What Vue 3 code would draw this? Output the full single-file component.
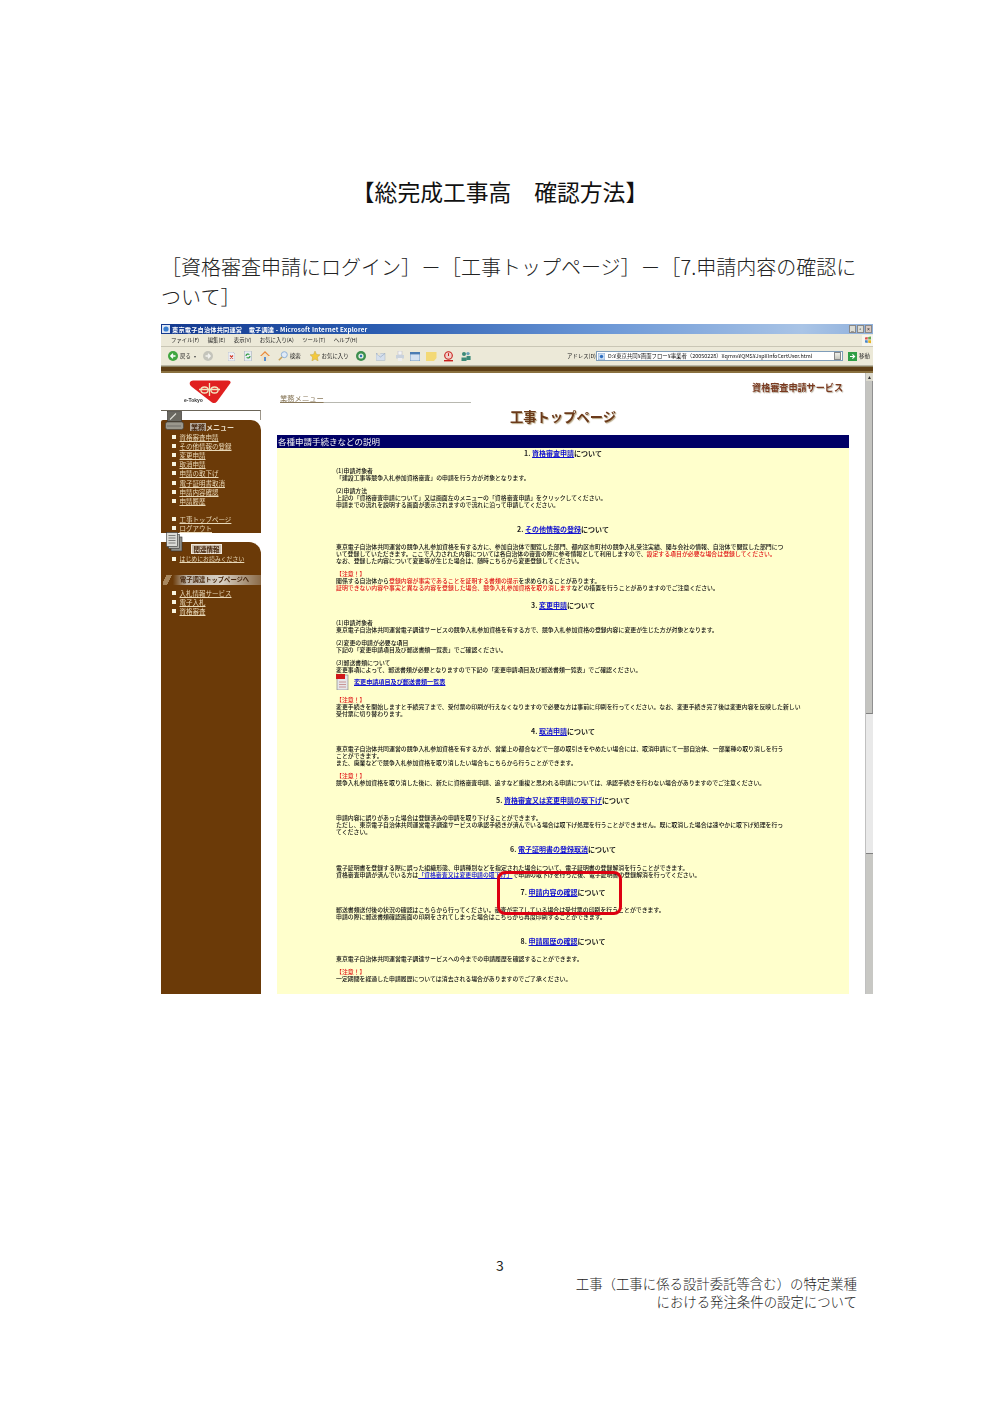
<script setup>
const R = (t) => ({ t, c: 'red' })
const L = (t) => ({ t, c: 'lnk' })

const sideMenu = ['資格審査申請', 'その他情報の登録', '変更申請', '取消申請', '申請の取下げ', '電子証明書取消', '申請内容確認', '申請履歴']
const sideMenu2 = ['工事トップページ', 'ログアウト']
const sideLinks = ['入札情報サービス', '電子入札', '資格審査']

const sections = [
  { n: '1.', link: '資格審査申請', tail: 'について', blocks: [
    ['(1)申請対象者', '「建設工事等競争入札参加資格審査」の申請を行う方が対象となります。'],
    ['(2)申請方法', '上記の「資格審査申請について」又は画面左のメニューの「資格審査申請」をクリックしてください。', '申請までの流れを説明する画面が表示されますので流れに沿って申請してください。']
  ] },
  { n: '2.', link: 'その他情報の登録', tail: 'について', wide: true, blocks: [
    ['東京電子自治体共同運営の競争入札参加資格を有する方に、参加自治体で閲覧した部門、都内区市町村の競争入札受注実績、関与会社の情報、自治体で閲覧した部門につ',
      ['いて登録していただきます。ここで入力された内容については各自治体の審査の際に参考情報として利用しますので、', R('設定する項目が必要な場合は登録してください。')],
      'なお、登録した内容について変更等が生じた場合は、随時こちらから変更登録してください。'],
    [[R('【注意！】')],
      ['関係する自治体から', R('登録内容が事実であることを証明する書類の提示'), 'を求められることがあります。'],
      [R('証明できない内容や事実と異なる内容を登録した場合、競争入札参加資格を取り消します'), 'などの措置を行うことがありますのでご注意ください。']]
  ] },
  { n: '3.', link: '変更申請', tail: 'について', blocks: [
    ['(1)申請対象者', '東京電子自治体共同運営電子調達サービスの競争入札参加資格を有する方で、競争入札参加資格の登録内容に変更が生じた方が対象となります。'],
    ['(2)変更の申請が必要な項目', '下記の「変更申請項目及び郵送書類一覧表」でご確認ください。'],
    ['(3)郵送書類について', '変更事項によって、郵送書類が必要となりますので下記の「変更申請項目及び郵送書類一覧表」でご確認ください。'],
    { pdf: '変更申請項目及び郵送書類一覧表' },
    [[R('【注意！】')], '変更手続きを開始しますと手続完了まで、受付票の印刷が行えなくなりますので必要な方は事前に印刷を行ってください。なお、変更手続き完了後は変更内容を反映した新しい', '受付票に切り替わります。']
  ] },
  { n: '4.', link: '取消申請', tail: 'について', blocks: [
    ['東京電子自治体共同運営の競争入札参加資格を有する方が、営業上の都合などで一部の取引きをやめたい場合には、取消申請にて一部自治体、一部業種の取り消しを行う', 'ことができます。', 'また、廃業などで競争入札参加資格を取り消したい場合もこちらから行うことができます。'],
    [[R('【注意！】')], '競争入札参加資格を取り消した後に、新たに資格審査申請、追すなど重複と思われる申請については、承認手続きを行わない場合がありますのでご注意ください。']
  ] },
  { n: '5.', link: '資格審査又は変更申請の取下げ', tail: 'について', blocks: [
    ['申請内容に誤りがあった場合は登録済みの申請を取り下げることができます。', 'ただし、東京電子自治体共同運営電子調達サービスの承認手続きが済んでいる場合は取下げ処理を行うことができません。既に取消した場合は速やかに取下げ処理を行っ', 'てください。']
  ] },
  { n: '6.', link: '電子証明書の登録取消', tail: 'について', blocks: [
    ['電子証明書を登録する際に誤った組織形態、申請種別などを指定された場合について、電子証明書の登録解消を行うことができます。',
      ['資格審査申請が済んでいる方は', L('「資格審査又は変更申請の取下げ」'), 'で申請の取下げを行った後、電子証明書の登録解消を行ってください。']]
  ] },
  { n: '7.', link: '申請内容の確認', tail: 'について', blocks: [
    ['郵送書類送付後の状況の確認はこちらから行ってください。審査が完了している場合は受付票の印刷を行うことができます。', '申請の際に郵送書類確認画面の印刷をされてしまった場合はこちらから再度印刷することができます。']
  ] },
  { n: '8.', link: '申請履歴の確認', tail: 'について', wide: true, blocks: [
    ['東京電子自治体共同運営電子調達サービスへの今までの申請履歴を確認することができます。'],
    [[R('【注意！】')], '一定期間を経過した申請履歴については消去される場合がありますのでご了承ください。']
  ] }
]

const segs = (line) => (Array.isArray(line) ? line : [line]).map((s) => (typeof s === 'string' ? { t: s, c: '' } : s))
</script>

<template>
  <div class="page">
    <h1 class="doc-title">【総完成工事高　確認方法】</h1>
    <p class="doc-path">［資格審査申請にログイン］－［工事トップページ］－［7.申請内容の確認に<br />ついて］</p>

    <div class="shot">
      <div class="titlebar">
        <svg class="ie" width="8" height="8" viewBox="0 0 8 8"><rect width="8" height="8" fill="#dfe8f5" /><circle cx="4" cy="4" r="2.6" fill="#3a7fd0" /></svg>
        <span class="title-text">東京電子自治体共同運営　電子調達 - Microsoft Internet Explorer</span>
        <span class="win-btns"><i>_</i><i>▫</i><i class="close">×</i></span>
      </div>

      <div class="menubar">
        <span>ファイル(F)</span><span>編集(E)</span><span>表示(V)</span><span>お気に入り(A)</span><span>ツール(T)</span><span>ヘルプ(H)</span>
        <span class="winlogo">
          <svg width="8" height="8" viewBox="0 0 8 8"><path d="M1 1.5 3.7 1v2.6H1z" fill="#d9534f" /><path d="M4.2 1 7 .6v3H4.2z" fill="#6aa84f" /><path d="M1 4.2h2.7v2.7L1 6.4z" fill="#4a86c8" /><path d="M4.2 4.2H7v3l-2.8-.4z" fill="#e6b422" /></svg>
        </span>
      </div>

      <div class="toolbar">
        <svg class="m0" width="10" height="10" viewBox="0 0 10 10"><circle cx="5" cy="5" r="5" fill="#3fa63f" /><path d="M7.5 5H3M5 2.8 2.8 5 5 7.2" stroke="#fff" stroke-width="1.3" fill="none" /></svg>
        <span class="tb-label m2">戻る</span>
        <span class="caret m3"></span>
        <svg class="m7" width="10" height="10" viewBox="0 0 10 10"><circle cx="5" cy="5" r="5" fill="#c4c4bb" /><path d="M2.5 5H7M5 2.8 7.2 5 5 7.2" stroke="#f4f4f0" stroke-width="1.3" fill="none" /></svg>
        <svg class="m15" width="7" height="9" viewBox="0 0 7 9"><path d="M0 0h5l2 2v7H0z" fill="#eef0f4" stroke="#9aa5b5" stroke-width=".5" /><path d="M2 3.5 5 6.5M5 3.5 2 6.5" stroke="#d23b2a" stroke-width="1.2" /></svg>
        <svg class="m8" width="10" height="10" viewBox="0 0 10 10"><rect x="1.5" width="7" height="10" fill="#e9edf2" stroke="#9aa5b5" stroke-width=".5" /><path d="M3 5a2 2 0 0 1 3.4-1.4M7 5a2 2 0 0 1-3.4 1.4" stroke="#2f9a3c" stroke-width="1.2" fill="none" /></svg>
        <svg class="m7" width="10" height="10" viewBox="0 0 10 10"><path d="M5 0 0 5h1.5v5h7V5H10z" fill="#f0e2c8" /><path d="M5 0 0 5h1.5L5 1.8 8.5 5H10z" fill="#e8893a" /><rect x="4" y="6" width="2" height="4" fill="#5b8fd0" /></svg>
        <svg class="m8" width="10" height="10" viewBox="0 0 10 10"><circle cx="6.3" cy="3.7" r="3" fill="#dfeaf7" stroke="#8fb0d6" /><path d="M4 6 .8 9.2" stroke="#c9a35a" stroke-width="1.5" /></svg>
        <span class="tb-label m2">検索</span>
        <svg class="m9" width="10" height="10" viewBox="0 0 10 10"><path d="M5 0 6.5 3.4 10 3.8 7.4 6.2 8.1 10 5 8.1 1.9 10 2.6 6.2 0 3.8 3.5 3.4z" fill="#f3c93c" stroke="#b69a3a" stroke-width=".4" /></svg>
        <span class="tb-label m2">お気に入り</span>
        <svg class="m7" width="10" height="10" viewBox="0 0 10 10"><circle cx="5" cy="5" r="5" fill="#3d8f4e" /><circle cx="5" cy="5" r="2.6" fill="#e6efe6" /><circle cx="5" cy="5" r="1.2" fill="#2f6fb8" /></svg>
        <svg class="m10" width="10" height="9" viewBox="0 0 10 9"><rect y="1.5" width="9" height="7" fill="#d5dfec" stroke="#9ab" stroke-width=".4" /><path d="M0 1.5 4.5 5 9 1.5" stroke="#8ea3bb" stroke-width=".6" fill="none" /><circle cx="3" cy="2" r="1.5" fill="#e9e3d0" /></svg>
        <svg class="m10" width="8" height="10" viewBox="0 0 8 10"><rect x="2" width="4" height="4" fill="#f4f4f4" stroke="#aab" stroke-width=".4" /><rect y="4" width="8" height="3.5" fill="#c9d2dc" /><rect x="2" y="7" width="4" height="3" fill="#eee" /></svg>
        <svg class="m6" width="10" height="9" viewBox="0 0 10 9"><rect width="10" height="9" fill="#d5e3f2" stroke="#4b7db3" stroke-width=".7" /><rect y="0" width="10" height="2.4" fill="#4b7db3" /></svg>
        <svg class="m6" width="11" height="10" viewBox="0 0 11 10"><path d="M0 1h10.5v6L8 10H0z" fill="#f3d976" /></svg>
        <svg class="m6" width="11" height="11" viewBox="0 0 11 11"><circle cx="5.5" cy="4.5" r="3.8" fill="#f2cfc8" stroke="#c8201c" stroke-width="1.1" /><path d="M5.5 2.2v2.8" stroke="#c8201c" /><rect x="1" y="9" width="9" height="1.4" fill="#c8201c" /></svg>
        <svg class="m7" width="10" height="10" viewBox="0 0 10 10"><circle cx="3" cy="3" r="2" fill="#3c8a78" /><circle cx="7" cy="2.6" r="1.7" fill="#6aa2b8" /><path d="M.5 10V6.5h5V10zM5.6 9V5h4v4z" fill="#3c8a78" /></svg>

        <div class="address">
          <span class="tb-label">アドレス(D)</span>
          <div class="addr-input">
            <svg width="7" height="7" viewBox="0 0 7 7"><rect width="7" height="7" fill="#cfe0f4" stroke="#6d93c4" stroke-width=".6" /><circle cx="3.5" cy="3.5" r="1.7" fill="#2f6fc0" /></svg>
            <span class="addr-text">D:¥東京共同¥画面フロー¥事業者（20050228）¥qmsv¥QMS¥Jsp¥InfoCertUser.html</span>
            <span class="addr-drop"></span>
          </div>
          <svg class="go" width="9" height="9" viewBox="0 0 9 9"><rect width="9" height="9" fill="#2f9e45" /><path d="M2 4.5h4.4M4.4 2.4 6.6 4.5 4.4 6.6" stroke="#fff" stroke-width="1.1" fill="none" /></svg>
          <span class="tb-label go-label">移動</span>
        </div>
      </div>

      <div class="brownstrip"></div>

      <div class="browser-body">
        <aside class="side">
          <div class="logo-block">
            <svg class="logo" width="44" height="24" viewBox="0 0 44 24">
              <path d="M2 2Q3 .5 5 .5H40Q43 .5 42.5 3L29 21.5Q27 24 24 22.5L4 7Q.8 4.5 2 2z" fill="#e02020" />
              <path d="M11 9.5H32M21.5 3v13" stroke="#f2e6c0" stroke-width="1.3" fill="none" />
              <ellipse cx="16.5" cy="10" rx="3.6" ry="3" fill="none" stroke="#f2e6c0" stroke-width="1.3" />
              <ellipse cx="26.5" cy="10" rx="3.6" ry="3" fill="none" stroke="#f2e6c0" stroke-width="1.3" />
            </svg>
            <span class="etokyo">e-Tokyo</span>
          </div>

          <div class="white-gap first">
            <svg class="pc-icon" width="19" height="19" viewBox="0 0 19 19"><rect x="2.500" y=".5" width="14" height="10" fill="#6a6860" stroke="#3c3a35" stroke-width=".7" /><path d="M5 8.500 11 2.500" stroke="#e0e0d8" stroke-width="1.1" /><rect x=".5" y="11" width="18" height="7.500" rx="2" fill="#9a978c" stroke="#3f3c35" stroke-width=".6" /><path d="M2.500 15h14" stroke="#444" stroke-width="1" stroke-dasharray="1 1" /></svg>
          </div>
          <div class="panel">
            <div class="panel-head"><b class="chip">業務</b><span class="chip-rest">メニュー</span></div>
            <ul class="side-list">
              <li v-for="m in sideMenu" :key="m"><i></i><a>{{ m }}</a></li>
            </ul>
            <ul class="side-list spaced">
              <li v-for="m in sideMenu2" :key="m"><i></i><a>{{ m }}</a></li>
            </ul>
          </div>

          <div class="white-gap">
            <svg class="doc-icon" width="17" height="20" viewBox="0 0 17 20"><rect x="5" y="5" width="11" height="14" fill="#8f8f8a" stroke="#333" stroke-width=".6" /><rect x="2.500" y="2.500" width="11" height="14" fill="#b5b5b0" stroke="#333" stroke-width=".6" /><rect x=".5" y=".5" width="11" height="14" fill="#dcdcd8" stroke="#333" stroke-width=".6" /><path d="M2.500 3.500h7M2.500 6h7M2.500 8.500h7M2.500 11h7" stroke="#555" stroke-width=".7" /></svg>
          </div>
          <div class="panel grow">
            <div class="panel-head second"><b class="chip boxed">関連情報</b></div>
            <ul class="side-list tight">
              <li><i></i><a>はじめにお読みください</a></li>
            </ul>
            <div class="banner">電子調達トップページへ</div>
            <ul class="side-list">
              <li v-for="m in sideLinks" :key="m"><i></i><a>{{ m }}</a></li>
            </ul>
          </div>
        </aside>

        <main class="content">
          <div class="content-top">
            <a class="biz-link">業務メニュー</a>
            <span class="biz-line"></span>
            <span class="service">資格審査申請サービス</span>
          </div>
          <h2 class="page-heading">工事トップページ</h2>
          <div class="navy">各種申請手続きなどの説明</div>
          <div class="yellow">
            <section v-for="s in sections" :key="s.n" class="sec" :class="{ wide: s.wide }">
              <h3 class="sec-head">{{ s.n }} <a>{{ s.link }}</a>{{ s.tail }}</h3>
              <template v-for="(b, i) in s.blocks" :key="i">
                <div v-if="b.pdf" class="pdf-row">
                  <svg width="13" height="16" viewBox="0 0 13 16"><rect x="1" y="1" width="11" height="15" fill="#e6e6ea" stroke="#777" stroke-width=".6" /><rect width="9" height="5" fill="#d01818" /><path d="M3 8h7M3 10.500h7M3 13h7" stroke="#c08080" stroke-width=".8" /></svg>
                  <a>{{ b.pdf }}</a>
                </div>
                <div v-else class="block">
                  <p v-for="(line, j) in b" :key="j" class="line"><span v-for="(g, k) in segs(line)" :key="k" :class="g.c">{{ g.t }}</span></p>
                </div>
              </template>
            </section>
          </div>
        </main>

        <div class="scroll">
          <span class="sc-btn">▲</span>
          <span class="sc-thumb"></span>
          <span class="sc-track"></span>
          <span class="sc-lower"></span>
        </div>
      </div>

      <div class="highlight"></div>
    </div>

    <div class="page-no">3</div>
    <div class="doc-foot">
      <p>工事（工事に係る設計委託等含む）の特定業種</p>
      <p>における発注条件の設定について</p>
    </div>
  </div>
</template>

<style>
html, body { margin: 0; background: #fff; }
</style>

<style scoped>
* { box-sizing: border-box; }
.page {
  width: 1000px;
  height: 1414px;
  padding: 177px 143px 0 161px;
  font-family: "Noto Sans CJK JP", "Liberation Serif", serif;
  color: #222;
  overflow: hidden;
}
.doc-title {
  margin: 0 18px 0 0;
  font-size: 22.8px;
  line-height: 30px;
  font-weight: 400;
  text-align: center;
  color: #111;
  white-space: nowrap;
}
.doc-path {
  margin: 45px 0 12px;
  font-size: 20px;
  line-height: 30px;
  font-weight: 300;
  white-space: nowrap;
  color: #222;
}
.shot {
  position: relative;
  width: 712px;
  height: 670px;
  display: flex;
  flex-direction: column;
  overflow: hidden;
  background: #fff;
  filter: blur(0.45px);
  font-family: "Noto Sans CJK JP", "Liberation Sans", sans-serif;
}

/* window chrome */
.titlebar {
  height: 10px;
  flex: none;
  display: flex;
  align-items: center;
  padding-left: 1px;
  background: linear-gradient(90deg, #14398f 0%, #2a5cb0 30%, #6b97d6 62%, #a9c4e6 90%, #8fb0dc 100%);
}
.title-text {
  margin-left: 2px;
  font-size: 6.2px;
  letter-spacing: 0.2px;
  font-weight: 700;
  color: #fff;
  white-space: nowrap;
}
.win-btns {
  margin-left: auto;
  display: flex;
  gap: 1px;
  padding-right: 1px;
}
.win-btns i {
  width: 7px;
  height: 8px;
  background: #dcdcd4;
  border: 0.5px solid #888;
  font: normal 5px/7px "Liberation Sans", sans-serif;
  color: #222;
  text-align: center;
}
.win-btns .close { background: #d8c8c0; }
.menubar {
  height: 13px;
  flex: none;
  display: flex;
  align-items: center;
  gap: 8.5px;
  padding-left: 10px;
  background: #ece9d8;
  border-bottom: 0.5px solid #c9c6b5;
  font-size: 5.4px;
  color: #222;
  white-space: nowrap;
}
.winlogo {
  margin-left: auto;
  width: 11px;
  height: 11px;
  background: #f6f5ee;
  display: flex;
  align-items: center;
  justify-content: center;
}
.toolbar {
  height: 19px;
  flex: none;
  display: flex;
  align-items: center;
  padding-left: 7px;
  background: #ece9d8;
  border-bottom: 1px solid #b9b6a6;
}
.toolbar svg { flex: none; }
.tb-label { font-size: 5.4px; color: #222; white-space: nowrap; }
.caret { width: 0; height: 0; border: 1.5px solid transparent; border-top: 2px solid #444; margin-top: 2px; }
.m2 { margin-left: 2px; }
.m3 { margin-left: 3px; }
.m6 { margin-left: 6px; }
.m7 { margin-left: 7px; }
.m8 { margin-left: 8px; }
.m9 { margin-left: 9px; }
.m10 { margin-left: 10px; }
.m15 { margin-left: 15px; }
.address {
  margin-left: auto;
  width: 306px;
  display: flex;
  align-items: center;
  padding-right: 3px;
}
.address .tb-label { width: 29px; flex: none; }
.addr-input {
  width: 247px;
  height: 10px;
  flex: none;
  display: flex;
  align-items: center;
  padding: 0 1px;
  gap: 3px;
  background: #fff;
  border: 0.5px solid #7f9db9;
}
.addr-text { font-size: 5.4px; color: #111; white-space: nowrap; overflow: hidden; flex: 1; }
.addr-drop {
  width: 7px;
  height: 8px;
  flex: none;
  background: linear-gradient(#f0f0ea, #c8c8be);
  border: 0.5px solid #888;
}
.go { margin-left: 5px; }
.address .go-label { margin-left: 2px; width: auto; }
.brownstrip {
  height: 7px;
  flex: none;
  background: linear-gradient(#8d8262 0 20%, #5e3f16 20% 70%, #8a7140 70%);
}

/* page body */
.browser-body {
  flex: 1;
  min-height: 0;
  display: flex;
}
.side {
  width: 100px;
  flex: none;
  display: flex;
  flex-direction: column;
  background: #fff;
}
.logo-block {
  position: relative;
  height: 37px;
  flex: none;
  padding: 7px 0 0 27px;
}
.logo { display: block; }
.etokyo {
  position: absolute;
  left: 23px;
  top: 24px;
  font: 700 5px/7px "Liberation Sans", sans-serif;
  color: #333;
}
.white-gap {
  position: relative;
  height: 9px;
  flex: none;
  background: #fff;
}
.white-gap.first {
  height: 10px;
  border-top: 1px solid #6b6558;
  border-right: 1px solid #9d968a;
}
.pc-icon { position: absolute; left: 4px; top: 0; z-index: 2; }
.doc-icon { position: absolute; left: 5px; top: -1px; z-index: 2; }
.panel {
  height: 113px;
  flex: none;
  background: #6b3a08;
  border-radius: 2px 10px 0 0;
}
.panel.grow { flex: 1; height: auto; border-radius: 0 12px 0 0; }
.panel-head {
  height: 12px;
  padding: 1px 0 0 29px;
  display: flex;
  align-items: center;
}
.panel-head.second { padding: 2px 0 0 30px; }
.chip {
  font-size: 7px;
  line-height: 8px;
  font-weight: 700;
  padding: 0 1px;
  background: #b5aca0;
  color: #4a2a10;
}
.chip.boxed { font-size: 6.5px; background: #cdbfae; border: 0.5px solid #f0e8dc; padding: 0 1.5px; }
.chip-rest { font-size: 7px; line-height: 8px; color: #e8dcc6; font-weight: 700; }
.side-list { list-style: none; margin: 0; padding: 0 0 0 11px; }
.side-list.spaced { margin-top: 9px; }
.side-list li {
  height: 9.2px;
  display: flex;
  align-items: center;
  gap: 3.5px;
  font-size: 6.5px;
  white-space: nowrap;
}
.side-list.tight li { font-size: 5.9px; }
.side-list i { width: 4px; height: 4px; background: #f8f4e0; flex: none; }
.side-list a { color: #e8d8b8; text-decoration: underline; }
.banner {
  margin: 12px 0 3px 2px;
  width: 98px;
  height: 10px;
  padding-left: 17px;
  background:
    linear-gradient(115deg, transparent 0 3px, #a8875e 3px 8px, transparent 8px),
    linear-gradient(90deg, #6b3a08 0 10%, #bdb4a8 24%, #d8d0c4 60%, #8a6a48 100%);
  font-size: 6.3px;
  line-height: 10px;
  font-weight: 700;
  color: #4a2a10;
  white-space: nowrap;
}
.content {
  flex: 1;
  min-width: 0;
  display: flex;
  flex-direction: column;
  padding: 0 16px;
  background: #fff;
}
.content-top {
  height: 34px;
  flex: none;
  position: relative;
  display: flex;
  align-items: flex-start;
  padding: 21px 0 0 3px;
}
.biz-link {
  font-size: 7.3px;
  line-height: 9px;
  color: #8a7a5c;
  text-decoration: underline;
  white-space: nowrap;
}
.biz-line {
  width: 147px;
  height: 1px;
  margin-top: 8px;
  background: #b8b8b0;
}
.service {
  position: absolute;
  right: 6px;
  top: 8px;
  font-size: 9.1px;
  line-height: 12px;
  font-weight: 700;
  color: #7a3a20;
  text-shadow: 1px 1px 1px #b8b0a0;
  white-space: nowrap;
}
.page-heading {
  margin: 0 0 8px;
  height: 20px;
  flex: none;
  font-size: 13.3px;
  line-height: 20px;
  font-weight: 700;
  text-align: center;
  color: #6b3a1a;
  text-shadow: 1px 1px 1px #b8a888;
}
.navy {
  height: 13px;
  flex: none;
  padding-left: 1px;
  background: #000066;
  color: #f4f4f4;
  font-size: 8.5px;
  line-height: 13px;
  white-space: nowrap;
}
.yellow {
  flex: 1;
  padding: 1.5px 0 0 59px;
  background: #ffffcc;
  color: #111;
  overflow: hidden;
}
.sec { margin-top: 11px; }
.sec:first-child { margin-top: 0; }
.sec.wide { margin-top: 18px; }
.sec-head {
  margin: 0 0 10.25px -59px;
  font-size: 7px;
  line-height: 7px;
  font-weight: 700;
  text-align: center;
  color: #222;
  white-space: nowrap;
}
.sec-head a { color: #1010d0; text-decoration: underline; }
.block + .block { margin-top: 6px; }
.pdf-row + .block { margin-top: 7px; }
.line {
  margin: 0;
  font-size: 5.9px;
  line-height: 7px;
  font-weight: 500;
  white-space: nowrap;
}
.red { color: #e01818; }
.lnk { color: #1010d0; text-decoration: underline; }
.pdf-row {
  height: 14px;
  margin-top: 1.5px;
  display: flex;
  align-items: center;
  gap: 5px;
  font-size: 6.1px;
  font-weight: 700;
  white-space: nowrap;
}
.pdf-row a { color: #1010d0; text-decoration: underline; }
.scroll {
  width: 8px;
  flex: none;
  display: flex;
  flex-direction: column;
  background: #e9e9e9;
  border-left: 0.5px solid #c0c0c0;
}
.sc-btn {
  height: 8px;
  flex: none;
  font: 5px/8px "Liberation Sans", sans-serif;
  text-align: center;
  background: #dcdace;
  color: #333;
}
.sc-thumb { height: 333px; flex: none; background: #c4c4c0; border-bottom: 1.5px solid #808080; border-right: 1px solid #909090; }
.sc-track { height: 139px; flex: none; background: #e9e9e9; }
.sc-lower { flex: 1; background: #c8c8c4; border-top: 1.5px solid #808080; }
.highlight {
  position: absolute;
  left: 336px;
  top: 547px;
  width: 125px;
  height: 44px;
  border: 3px solid #dd0011;
  border-radius: 8px;
}

/* document footer */
.page-no {
  margin: 262px 18px 0 0;
  height: 18px;
  font-size: 14px;
  line-height: 18px;
  text-align: center;
  color: #222;
}
.doc-foot {
  font-size: 13.4px;
  line-height: 18px;
  text-align: right;
  font-weight: 300;
  color: #222;
  white-space: nowrap;
}
.doc-foot p { margin: 0; }
</style>
